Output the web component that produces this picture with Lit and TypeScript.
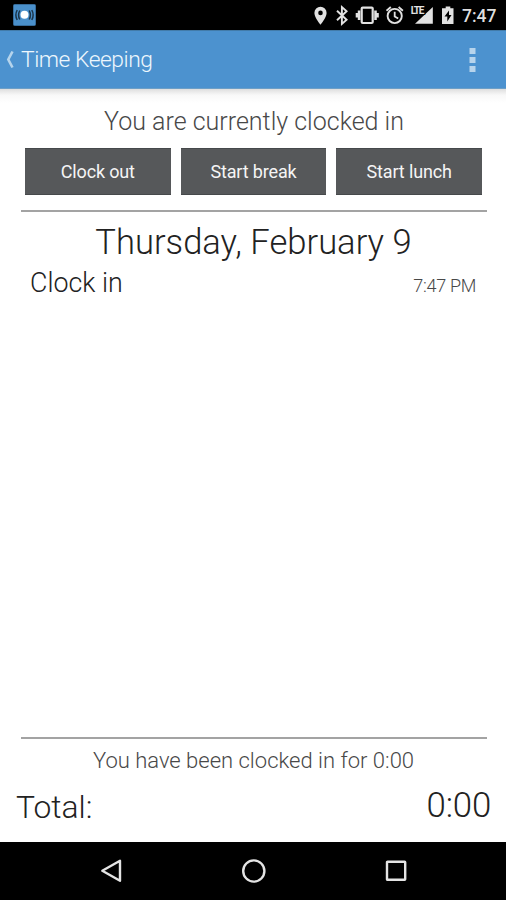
import { LitElement, html, css } from "lit";
import { customElement } from "lit/decorators.js";

@customElement("status-bar")
class StatusBar extends LitElement {
  static styles = css`
    :host { display: flex; height: 30px; background: #000; align-items: center; justify-content: space-between; }
    svg { display: block; }
    .right { display: flex; align-items: center; }
    .app { margin-left: 13px; }
    .time { width: 44px; box-sizing: border-box; color: #dedede; font: 500 17.5px/30px Roboto, sans-serif; padding-top: 2px; }
    .lte { font: 700 10px Roboto, sans-serif; letter-spacing: -1.2px; }
  `;
  render() {
    return html`
      <svg class="app" width="23" height="22" viewBox="0 0 23 22">
        <rect x="0.5" y="0.5" width="22" height="21" rx="1" fill="#4a90cb" stroke="#376c9a"/>
        <circle cx="11.5" cy="10.7" r="4" fill="#fff"/>
        <path d="M6.8 6.5Q4.4 11 6.8 15.5M16.2 6.5Q18.6 11 16.2 15.5M4.2 6Q1.5 11 4.2 16M18.8 6Q21.5 11 18.8 16" fill="none" stroke="#1b3448" stroke-width="1.5"/>
      </svg>
      <div class="right">
        <svg width="148" height="30" viewBox="314 0 148 30" fill="#e2e2e2">
          <path fill-rule="evenodd" d="M320.5 6.8a6.1 6.1 0 0 0-6.1 6.1c0 4.6 6.1 11.7 6.1 11.7s6.1-7.1 6.1-11.7a6.1 6.1 0 0 0-6.1-6.1zm0 3.800a2.3 2.3 0 1 1 0 4.600a2.3 2.3 0 0 1 0-4.600z"/>
          <path d="M337 10.7l9.600 9.100-4.700 4.200V7l4.700 4.200-9.600 9.100" fill="none" stroke="#e2e2e2" stroke-width="1.9"/>
          <rect x="361.7" y="7.6" width="11" height="15.4" rx="1" fill="none" stroke="#e2e2e2" stroke-width="2.2"/>
          <path d="M357.8 10.5h2.600v9.500h-2.600zM374.2 10.5h2.600v9.500h-2.600zM355.7 13h2.100v4.600h-2.100zM376.8 13h2v4.600h-2z"/>
          <circle cx="394.7" cy="16" r="7.1" fill="none" stroke="#e2e2e2" stroke-width="1.9"/>
          <path d="M386.5 10.7l4.300-3.700M402.9 10.7l-4.300-3.700M394.7 11.8v4.600l3.500 2.200" fill="none" stroke="#e2e2e2" stroke-width="1.8"/>
          <path d="M432.8 7v16.700H415z"/>
          <text class="lte" x="410.7" y="13.8" stroke="#000" stroke-width="2" paint-order="stroke">LTE</text>
          <path fill-rule="evenodd" d="M443 8.300h2.700V6.500h4.600v1.800h3.200V24H442V8.300zM449 10.500l-4.500 6h2.800V21.500l4.200-6.500h-2.500z"/>
        </svg>
        <div class="time">7:47</div>
      </div>`;
  }
}

@customElement("title-bar")
class TitleBar extends LitElement {
  static styles = css`
    :host { display: flex; height: 59px; box-sizing: border-box; background: #4c92cf; border-top: 1px solid #427ba9; border-bottom: 1px solid #6d9fc7; align-items: center; }
    svg { display: block; }
    .back { margin-left: 4px; }
    .title { flex: 1; margin-left: 5px; color: #eef7fd; font: 300 22.8px/58px Roboto, sans-serif; letter-spacing: -0.45px; padding-top: 1px; }
    .more { margin-right: 30px; }
  `;
  render() {
    return html`
      <svg class="back" width="12" height="22" viewBox="0 0 12 22"><path d="M8.5 2.5L4.3 10.5L8.5 18.5" fill="none" stroke="#b5d4ec" stroke-width="2.6"/></svg>
      <div class="title">Time Keeping</div>
      <svg class="more" width="7" height="26" viewBox="0 0 7 26" fill="#b7d4ec"><path d="M.5 1h6v6h-6zM.5 10h6v6h-6zM.5 19h6v6h-6z"/></svg>`;
  }
}

@customElement("nav-bar")
class NavBar extends LitElement {
  static styles = css`
    :host { display: flex; height: 58px; background: #000; align-items: center; justify-content: center; gap: 114px; padding-left: 1px; box-sizing: border-box; }
    svg { display: block; fill: none; stroke: #e4e4e4; stroke-width: 2.4; }
  `;
  render() {
    return html`
      <svg width="28" height="28" viewBox="0 0 28 28"><path d="M22 3.8v20L4.3 13.8z" stroke-linejoin="round"/></svg>
      <svg width="28" height="28" viewBox="0 0 28 28"><circle cx="13.8" cy="14" r="10.6"/></svg>
      <svg width="28" height="28" viewBox="0 0 28 28"><rect x="5" y="4.7" width="18.2" height="18" rx=".5"/></svg>`;
  }
}

@customElement("app-root")
class AppRoot extends LitElement {
  static styles = css`
    :host { display: flex; flex-direction: column; height: 900px; background: #fff; font-family: Roboto, sans-serif; font-weight: 300; color: #222; }
    main { flex: 1; display: flex; flex-direction: column; background: linear-gradient(#dedede, #f8f8f8 6px, #fff 14px); }
    .state { margin-top: 13px; padding-left: 2px; text-align: center; font-size: 25px; line-height: 40px; color: #484848; }
    .actions { display: grid; grid-template-columns: repeat(3, 1fr); gap: 10px; margin: 6px 24px 0 25px; }
    .actions button { height: 47px; border: 0; border-top: 1px solid #46494b; border-bottom: 1px solid #46494b; padding: 0; background: #56585a; color: #f5f5f5; font: 400 18px Roboto, sans-serif; letter-spacing: -0.15px; }
    .rule { height: 2px; margin: 0 19px 0 21px; background: #a3a3a3; }
    .top { margin-top: 15px; }
    .date { margin-top: 8px; padding-left: 1px; text-align: center; font-size: 34.6px; line-height: 44px; }
    .entry { display: flex; justify-content: space-between; margin: 2px 30px 0 30px; font-size: 26.8px; line-height: 34px; }
    .entry .at { font-size: 18px; line-height: 40px; height: 34px; color: #484848; letter-spacing: -0.3px; }
    .space { flex: 1; }
    .elapsed { margin-top: 7px; padding-left: 1px; text-align: center; font-size: 22px; line-height: 30px; color: #484848; }
    .total { display: flex; justify-content: space-between; margin: 5px 15px 10px 16px; height: 51px; line-height: 52px; font-size: 31.8px; }
    .total .sum { font-size: 34.8px; line-height: 48px; letter-spacing: -0.2px; }
  `;
  private actions = ["Clock out", "Start break", "Start lunch"];
  render() {
    return html`
      <status-bar></status-bar>
      <title-bar></title-bar>
      <main>
        <div class="state">You are currently clocked in</div>
        <div class="actions">${this.actions.map((a) => html`<button>${a}</button>`)}</div>
        <div class="rule top"></div>
        <div class="date">Thursday, February 9</div>
        <div class="entry"><span>Clock in</span><span class="at">7:47 PM</span></div>
        <div class="space"></div>
        <div class="rule"></div>
        <div class="elapsed">You have been clocked in for 0:00</div>
        <div class="total"><span>Total:</span><span class="sum">0:00</span></div>
      </main>
      <nav-bar></nav-bar>`;
  }
}
